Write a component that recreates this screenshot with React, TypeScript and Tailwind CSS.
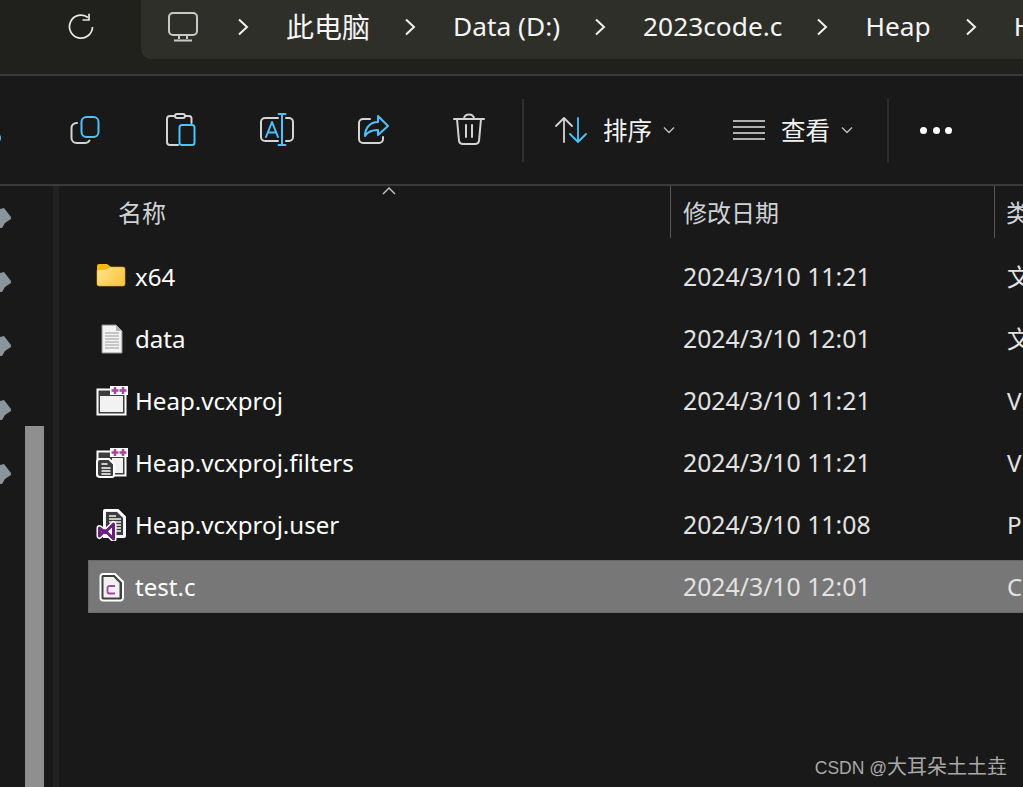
import React from "react";

const W = "#d4d4d4";
const B = "#4cc2ff";

function Icon({ children }: { children: React.ReactNode }) {
  return (
    <svg width="40" height="40" viewBox="0 0 40 40" fill="none" strokeWidth="2" strokeLinecap="round" strokeLinejoin="round">
      {children}
    </svg>
  );
}

function Cell({ children }: { children: React.ReactNode }) {
  return <div className="flex w-24 shrink-0 items-center justify-center">{children}</div>;
}

function Chevron() {
  return (
    <svg width="12" height="18" viewBox="0 0 12 18" fill="none" stroke="#f0f0f0" strokeWidth="2" className="mr-[3px] shrink-0">
      <path d="M2 1.500 10 9 2 16.500" />
    </svg>
  );
}

function Small() {
  return (
    <svg width="12" height="8" viewBox="0 0 12 8" fill="none" stroke="#bdbdbd" strokeWidth="1.400" className="shrink-0">
      <path d="M1 1.500 6 6.500 11 1.500" />
    </svg>
  );
}

function Pin() {
  return (
    <svg width="12" height="20" viewBox="0 0 12 20" fill="#89949b">
      <path d="M0 1 4 0 11 9 11 11 5 15 2 20 0 20Z" />
    </svg>
  );
}

function Folder() {
  return (
    <svg width="30" height="24" viewBox="0 0 30 24" className="-translate-x-px -translate-y-[2px]">
      <defs>
        <linearGradient id="fold" x1="0" y1="0" x2="1" y2="0.600">
          <stop offset="0" stopColor="#ffe493" />
          <stop offset="1" stopColor="#fcc740" />
        </linearGradient>
      </defs>
      <path d="M1 3a2 2 0 0 1 2-2h8l4 3v3H1Z" fill="#f8b90f" />
      <path d="M1 7l10-1 3-2h13a2 2 0 0 1 2 2v15a2 2 0 0 1-2 2H3a2 2 0 0 1-2-2Z" fill="url(#fold)" stroke="#e9a81a" strokeWidth="0.600" />
    </svg>
  );
}

function DataFile() {
  return (
    <svg width="24" height="30" viewBox="0 0 24 30">
      <path d="M2 1h14l6 6v22H2Z" fill="#f3f3f3" stroke="#8c8c8c" />
      <path d="M16 1v6h6Z" fill="#b5b5b5" />
      <path d="M5 9h14M5 12h14M5 15h14M5 18h14M5 21h14M5 24h14" stroke="#9a9a9a" />
    </svg>
  );
}

function Plus({ x }: { x: number }) {
  return <path d={`M${x - 3.5} 4.500h7M${x} 1v7`} stroke="#a4479f" strokeWidth="2.500" />;
}

function Proj() {
  return (
    <svg width="32" height="30" viewBox="0 0 32 30">
      <rect x="1.500" y="3.500" width="28" height="25" fill="#3d3d3d" stroke="#fff" strokeWidth="2" />
      <rect x="4" y="10" width="23" height="16" fill="#f2f2f2" />
      <rect x="14" y="0" width="18" height="9" fill="#fff" />
      <Plus x={19} />
      <Plus x={27} />
    </svg>
  );
}

function Filters() {
  return (
    <svg width="32" height="30" viewBox="0 0 32 30">
      <rect x="1.500" y="3.500" width="28" height="24" fill="#3d3d3d" stroke="#fff" strokeWidth="2" />
      <rect x="16" y="10" width="11" height="15" fill="#f2f2f2" />
      <rect x="14" y="0" width="18" height="9" fill="#fff" />
      <Plus x={19} />
      <Plus x={27} />
      <path d="M4 11h9l5 5v11a2 2 0 0 1-2 2H4a3 3 0 0 1-3-3V14a3 3 0 0 1 3-3Z" fill="#3d3d3d" stroke="#fff" strokeWidth="2" />
      <path d="M5.500 16h6M5.500 20h9M5.500 23h9M5.500 26h9" stroke="#fff" strokeWidth="1.500" />
    </svg>
  );
}

function User() {
  return (
    <svg width="32" height="32" viewBox="0 0 32 32">
      <path d="M9 1h13l7 7v19a1 1 0 0 1-1 1H8V2a1 1 0 0 1 1-1Z" fill="#f2f2f2" stroke="#fff" strokeWidth="2" />
      <path d="M10 3h11l6 6v17H10Z" fill="#3d3d3d" />
      <path d="M13 7h7M13 10h12M13 13h12M20 16h5M20 19h5M20 22h5" stroke="#f2f2f2" strokeWidth="1.500" />
      <path d="M3.500 19 9 23.500 17.500 15V30L9 21.500 3.500 27Z" fill="none" stroke="#fff" strokeWidth="6" strokeLinejoin="round" />
      <path d="M3.500 19 9 23.500 17.500 15V30L9 21.500 3.500 27Z" fill="none" stroke="#68217a" strokeWidth="3" strokeLinejoin="round" />
    </svg>
  );
}

function CFile() {
  return (
    <svg width="26" height="30" viewBox="0 0 26 30">
      <path d="M4 2h12l8 8v16a2.500 2.500 0 0 1-2.500 2.500H4A2.500 2.500 0 0 1 1.500 26V4.500A2.500 2.500 0 0 1 4 2Z" fill="#3f3f3f" stroke="#fff" strokeWidth="2" />
      <path d="M4.500 5h10l6 6v14.500H4.500Z" fill="#f1f1f1" />
      <path d="M16 14h-5.500a2 2 0 0 0-2 2v3.500a2 2 0 0 0 2 2H16" stroke="#a4479f" strokeWidth="1.800" fill="none" />
    </svg>
  );
}

const rows = [
  { icon: <Folder />, name: "x64", date: "2024/3/10 11:21", type: "文" },
  { icon: <DataFile />, name: "data", date: "2024/3/10 12:01", type: "文" },
  { icon: <Proj />, name: "Heap.vcxproj", date: "2024/3/10 11:21", type: "V" },
  { icon: <Filters />, name: "Heap.vcxproj.filters", date: "2024/3/10 11:21", type: "V" },
  { icon: <User />, name: "Heap.vcxproj.user", date: "2024/3/10 11:08", type: "P" },
  { icon: <CFile />, name: "test.c", date: "2024/3/10 12:01", type: "C", selected: true },
];

export default function App() {
  return (
    <div className="relative h-[787px] w-[1023px] overflow-hidden bg-[#191919] text-white [font-family:'Noto_Sans','Noto_Sans_CJK_SC',sans-serif]">
      {/* address bar */}
      <div className="flex h-[76px] border-b-2 border-[#3a3a3a] bg-[#20201c]">
        <div className="flex h-[54px] w-[141px] shrink-0 items-center justify-center pl-[21px]">
          <svg width="28" height="28" viewBox="0 0 28 28" fill="none" stroke="#e8e8e8" strokeWidth="1.700">
            <path d="M21 4.500A11.500 11.500 0 1 0 25.500 14" />
            <path d="M15.500 7H22V0.800" />
          </svg>
        </div>
        <div className="flex h-[59px] min-w-0 flex-1 items-center gap-[34px] overflow-hidden rounded-bl-[10px] bg-[#2f2f2a] pb-[5px] pl-[27px] text-[26.300px] whitespace-nowrap text-[#f5f5f5]">
          <svg width="30" height="30" viewBox="0 0 30 30" fill="none" stroke="#c8c8c8" strokeWidth="2" className="mr-[5px] shrink-0">
            <rect x="1" y="1" width="28" height="22" rx="4" />
            <path d="M11 23v4M19 23v4M6 28.500h18" />
          </svg>
          <Chevron />
          <span className="text-[28px]">此电脑</span>
          <Chevron />
          <span>Data (D:)</span>
          <Chevron />
          <span>2023code.c</span>
          <Chevron />
          <span>Heap</span>
          <Chevron />
          <span>Heap</span>
        </div>
      </div>

      {/* command bar */}
      <div className="flex h-[110px] items-center border-b-2 border-[#3a3a3a]">
        <div className="-ml-[59px] flex shrink-0">
          <Cell>
            <Icon>
              <circle cx="14" cy="28" r="5" stroke={B} />
              <circle cx="26" cy="28" r="5" stroke={B} />
            </Icon>
          </Cell>
          <Cell>
            <Icon>
              <path d="M12 13a5 5 0 0 0-5.500 5v10a5 5 0 0 0 5 5h9a5 5 0 0 0 4-2.500" stroke={W} />
              <rect x="16.500" y="7" width="17" height="20" rx="5" stroke={B} />
            </Icon>
          </Cell>
          <Cell>
            <Icon>
              <path d="M14 6h-5a3 3 0 0 0-3 3v23a3 3 0 0 0 3 3h8M24 6h4a2.500 2.500 0 0 1 2.500 2.500V13" stroke={W} />
              <rect x="14" y="4" width="10" height="4" rx="2" stroke={W} />
              <rect x="18.500" y="15" width="15" height="20" rx="2.500" stroke={B} />
            </Icon>
          </Cell>
          <Cell>
            <Icon>
              <path d="M21 9H8a4 4 0 0 0-4 4v15a4 4 0 0 0 4 4h13M29 9h3a4 4 0 0 1 4 4v15a4 4 0 0 1-4 4h-3" stroke={W} transform="translate(0 -1)" />
              <path d="M25 4v31M21.500 4h7M21.500 35h7" stroke={B} />
              <path d="M9 27 15 12 21 27M11 22.500h8" stroke={B} />
            </Icon>
          </Cell>
          <Cell>
            <Icon>
              <path d="M17 9H10a4 4 0 0 0-4 4v16a4 4 0 0 0 4 4h16a4 4 0 0 0 4-4v-2" stroke={W} />
              <path d="M25 6 35 16 25 25V20C20 20 15 21 12 26 12 18 17 12 25 12Z" stroke={B} />
            </Icon>
          </Cell>
          <Cell>
            <Icon>
              <path d="M5 9h30M15 9c0-6 10-6 10 0M8 9l2 22a4 4 0 0 0 4 3h12a4 4 0 0 0 4-3l2-22M17 15v12M23 15v12" stroke={W} />
            </Icon>
          </Cell>
        </div>
        <div className="ml-[5px] h-[63px] w-[2px] shrink-0 bg-[#2e2e2e]" />
        <div className="ml-[31px] flex items-center">
          <svg width="32" height="26" viewBox="0 0 32 26" fill="none" strokeWidth="1.800" strokeLinecap="round" strokeLinejoin="round">
            <path d="M9 25V1M1 9l8-8 8 8" stroke={W} />
            <path d="M23 1v24M15 17l8 8 8-8" stroke={B} />
          </svg>
          <span className="ml-[16px] pt-[3px] text-[24.500px] leading-none text-[#f2f2f2]">排序</span>
          <span className="ml-[11px]"><Small /></span>
        </div>
        <div className="ml-[58px] flex items-center">
          <svg width="32" height="20" viewBox="0 0 32 20" fill="none" stroke="#e4e4e4" strokeWidth="1.700">
            <path d="M0 1h32M0 7h32M0 13h32M0 19h32" />
          </svg>
          <span className="ml-[16px] pt-[3px] text-[24.500px] leading-none text-[#f2f2f2]">查看</span>
          <span className="ml-[11px]"><Small /></span>
        </div>
        <div className="ml-[34px] h-[63px] w-[2px] shrink-0 bg-[#2e2e2e]" />
        <div className="ml-[31px] flex gap-[5.500px]">
          <div className="size-[7px] rounded-full bg-white" />
          <div className="size-[7px] rounded-full bg-white" />
          <div className="size-[7px] rounded-full bg-white" />
        </div>
      </div>

      {/* body */}
      <div className="flex h-[601px]">
        <div className="flex w-[53px] shrink-0">
          <div className="flex w-[25px] shrink-0 flex-col gap-[44px] pt-[22px]">
            <Pin />
            <Pin />
            <Pin />
            <Pin />
            <Pin />
          </div>
          <div className="w-[19px] shrink-0 pt-[240px]">
            <div className="h-full bg-[#8f8f8f]" />
          </div>
        </div>
        <div className="w-[6px] shrink-0 bg-[#222222]" />
        <div className="min-w-0 flex-1 overflow-hidden">
          <div className="relative flex h-[52px] text-[24px] text-[#cfd3d6]">
            <svg width="14" height="8" viewBox="0 0 14 8" fill="none" stroke="#c8c8c8" strokeWidth="1.400" className="absolute top-[1px] left-[323px]">
              <path d="M1 7 7 1l6 6" />
            </svg>
            <div className="flex w-[612px] shrink-0 items-center border-r border-[#555] pt-[2px] pl-[59px]">名称</div>
            <div className="flex w-[324px] shrink-0 items-center border-r border-[#555] pt-[2px] pl-[12px]">修改日期</div>
            <div className="flex items-center pt-[2px] pl-[11px] whitespace-nowrap">类型</div>
          </div>
          <div className="flex flex-col gap-[9px] pt-[12px] pl-[29px]">
            {rows.map((r) => (
              <div
                key={r.name}
                className={
                  "flex h-[53px] w-[960px] shrink-0 items-center border text-[24.100px] whitespace-nowrap " +
                  (r.selected ? "border-[#6a6a6a] bg-[#777777]" : "border-transparent")
                }
              >
                <div className="flex w-[46px] shrink-0 justify-center">{r.icon}</div>
                <div className="w-[548px] shrink-0 pt-px text-white">{r.name}</div>
                <div className="w-[324px] shrink-0 pt-px text-[24.800px] text-[#e2e2e2]">{r.date}</div>
                <div className="pt-px text-[#e2e2e2]">{r.type}</div>
              </div>
            ))}
          </div>
        </div>
      </div>

      <div className="absolute right-[16px] bottom-[10px] flex items-baseline leading-none whitespace-pre text-[#a8a8a8] [font-family:'Liberation_Sans','Noto_Sans_CJK_SC',sans-serif]">
        <span className="text-[17.500px]">CSDN @</span>
        <span className="text-[20px]">大耳朵土土垚</span>
      </div>
    </div>
  );
}
